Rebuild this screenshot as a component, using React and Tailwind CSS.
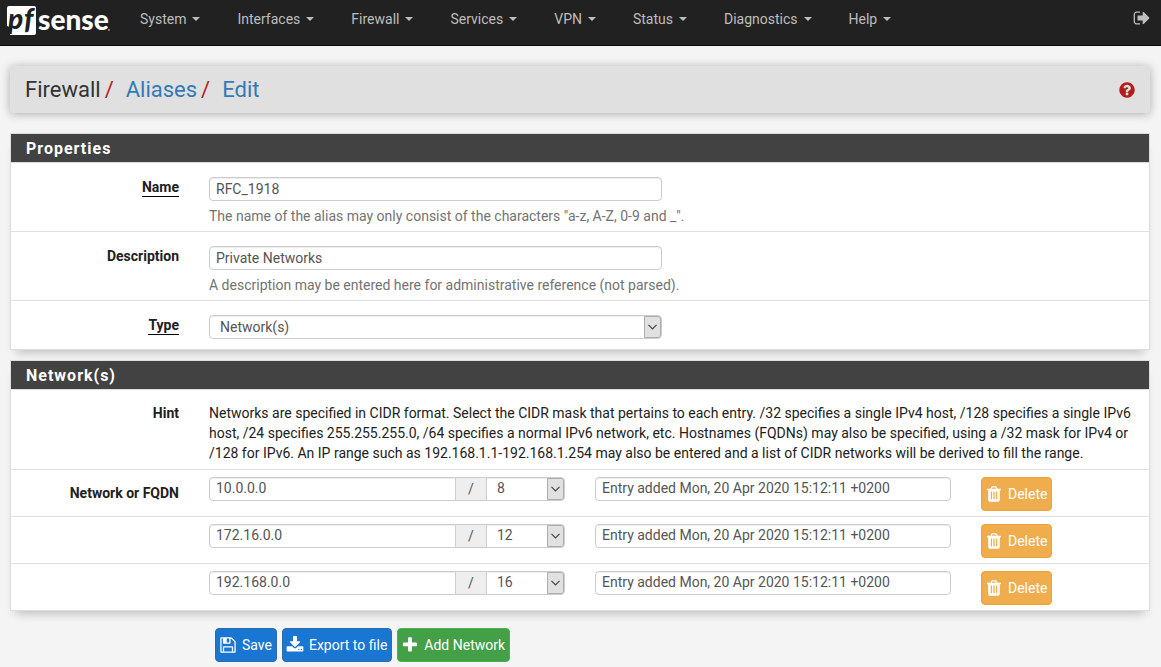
import { useState } from 'react';

const NAV_ITEMS = ['System', 'Interfaces', 'Firewall', 'Services', 'VPN', 'Status', 'Diagnostics', 'Help'];

const ICONS = {
  signOut:
    'M704 1440q0 4 1 20t.5 26.5-3 23.5-10 19.5-20.5 6.5h-320q-119 0-203.5-84.5t-84.5-203.5v-704q0-119 84.5-203.5t203.5-84.5h320q13 0 22.5 9.5t9.5 22.5q0 4 1 20t.5 26.5-3 23.5-10 19.5-20.5 6.5h-320q-66 0-113 47t-47 113v704q0 66 47 113t113 47h312l11.5 1 11.5 3 8 5.5 7 9 2 13.5zm928-544q0 26-19 45l-544 544q-19 19-45 19t-45-19-19-45v-288h-448q-26 0-45-19t-19-45v-384q0-26 19-45t45-19h448v-288q0-26 19-45t45-19 45 19l544 544q19 19 19 45z',
  question:
    'M1024 1376v-192q0-14-9-23t-23-9h-192q-14 0-23 9t-9 23v192q0 14 9 23t23 9h192q14 0 23-9t9-23zm256-672q0-88-55.5-163t-138.5-116-170-41q-243 0-371 213-15 24 8 42l132 100q7 6 19 6 16 0 25-12 53-68 86-92 34-24 86-24 48 0 85.5 26t37.5 59q0 38-20 61t-68 45q-63 28-115.5 86.5t-52.5 125.5v36q0 14 9 23t23 9h192q14 0 23-9t9-23q0-19 21.5-49.5t54.5-49.5q32-18 49-28.5t46-35 44.5-48 28-60.5 12.5-81zm384 192q0 209-103 385.5t-279.5 279.5-385.5 103-385.5-103-279.5-279.5-103-385.5 103-385.5 279.5-279.5 385.5-103 385.5 103 279.5 279.5 103 385.5z',
  trash:
    'M704 1376v-704q0-14-9-23t-23-9h-64q-14 0-23 9t-9 23v704q0 14 9 23t23 9h64q14 0 23-9t9-23zm256 0v-704q0-14-9-23t-23-9h-64q-14 0-23 9t-9 23v704q0 14 9 23t23 9h64q14 0 23-9t9-23zm256 0v-704q0-14-9-23t-23-9h-64q-14 0-23 9t-9 23v704q0 14 9 23t23 9h64q14 0 23-9t9-23zm-544-992h448l-48-117q-7-9-17-11h-317q-10 2-17 11zm928 32v64q0 14-9 23t-23 9h-96v948q0 83-47 143.5t-113 60.5h-832q-66 0-113-58.5t-47-141.5v-952h-96q-14 0-23-9t-9-23v-64q0-14 9-23t23-9h309l70-167q15-37 54-63t79-26h320q40 0 79 26t54 63l70 167h309q14 0 23 9t9 23z',
  save: 'M512 1536h768v-384h-768v384zm896 0h128v-896q0-14-10-38.5t-20-34.5l-281-281q-10-10-34-20t-39-10v416q0 40-28 68t-68 28h-576q-40 0-68-28t-28-68v-416h-128v1280h128v-416q0-40 28-68t68-28h832q40 0 68 28t28 68v416zm-384-928v-320q0-13-9.5-22.5t-22.5-9.5h-192q-13 0-22.5 9.5t-9.5 22.5v320q0 13 9.5 22.5t22.5 9.5h192q13 0 22.5-9.5t9.5-22.5zm640 32v928q0 40-28 68t-68 28h-1344q-40 0-68-28t-28-68v-1344q0-40 28-68t68-28h928q40 0 88 20t76 48l280 280q28 28 48 76t20 88z',
  download:
    'M1344 1344q0-26-19-45t-45-19-45 19-19 45 19 45 45 19 45-19 19-45zm256 0q0-26-19-45t-45-19-45 19-19 45 19 45 45 19 45-19 19-45zm128-224v320q0 40-28 68t-68 28h-1472q-40 0-68-28t-28-68v-320q0-40 28-68t68-28h465l135 136q58 56 136 56t136-56l136-136h464q40 0 68 28t28 68zm-325-569q17 41-14 70l-448 448q-18 19-45 19t-45-19l-448-448q-31-29-14-70 17-39 59-39h256v-448q0-26 19-45t45-19h256q26 0 45 19t19 45v448h256q42 0 59 39z',
  plus: 'M1600 736v192q0 40-28 68t-68 28h-416v416q0 40-28 68t-68 28h-192q-40 0-68-28t-28-68v-416h-416q-40 0-68-28t-28-68v-192q0-40 28-68t68-28h416v-416q0-40 28-68t68-28h192q40 0 68 28t28 68v416h416q40 0 68 28t28 68z',
};

const INITIAL_ENTRIES = [
  { id: 0, address: '10.0.0.0', mask: '8', detail: 'Entry added Mon, 20 Apr 2020 15:12:11 +0200' },
  { id: 1, address: '172.16.0.0', mask: '12', detail: 'Entry added Mon, 20 Apr 2020 15:12:11 +0200' },
  { id: 2, address: '192.168.0.0', mask: '16', detail: 'Entry added Mon, 20 Apr 2020 15:12:11 +0200' },
];

const MASKS = Array.from({ length: 129 }, (_, i) => String(128 - i));

const fieldClass =
  'block w-full h-6 rounded border border-[#ccc] bg-white px-1.5 text-sm leading-[18px] text-[#555] shadow-[inset_0_1px_1px_rgba(0,0,0,0.075)] outline-none';

const buttonClass = 'flex h-[34px] items-center gap-[5px] rounded border pl-[3px] pr-1 text-white';

function Icon({ name, size = 18 }) {
  return (
    <svg width={size} height={size} viewBox="0 0 1792 1792" fill="currentColor" aria-hidden="true" className="shrink-0">
      <path d={ICONS[name]} />
    </svg>
  );
}

function Logo() {
  return (
    <a href="#home" aria-label="pfSense" className="block shrink-0">
      <svg width="110" height="44" viewBox="0 0 110 44" aria-hidden="true">
        <path d="M9 6H34Q36 6 36 8V33Q36 35 34 35H10L12 28L7 26V8Q7 6 9 6Z" fill="#fff" />
        <g fontFamily="Lato, sans-serif" fontWeight="900" fontSize="28">
          <text y="29" fontStyle="italic" fill="#212121">
            <tspan x="8">p</tspan>
            <tspan x="24">f</tspan>
          </text>
          <text x="38" y="30" fill="#fff">
            sense
          </text>
        </g>
        <circle cx="109" cy="30" r="1" fill="#999" />
      </svg>
    </a>
  );
}

function Navbar() {
  return (
    <header className="flex h-[46px] items-start border-b border-[#080808] bg-[#212121] pr-2.5 text-[#bdbdbd]">
      <Logo />
      <nav className="ml-[30px] flex flex-1 gap-[37px] pt-[9px]">
        {NAV_ITEMS.map((item) => (
          <a key={item} href={`#${item.toLowerCase()}`} className="flex items-center gap-1.5 text-sm">
            {item}
            <span className="border-x-4 border-t-4 border-x-transparent border-t-[#bdbdbd]" />
          </a>
        ))}
      </nav>
      <a href="#logout" aria-label="Logout" className="pt-[9px]">
        <Icon name="signOut" />
      </a>
    </header>
  );
}

function Panel({ title, children }) {
  return (
    <section className="border border-[#ddd] bg-white shadow-[0_8px_10px_-6px_rgba(0,0,0,0.25)]">
      <h2 className="border-b border-[#ddd] bg-[#424242] px-[15px] pt-px text-base leading-[27px] font-bold tracking-[1px] text-white">
        {title}
      </h2>
      <div className="divide-y divide-[#e0e0e0]">{children}</div>
    </section>
  );
}

function FormRow({ label, htmlFor, required, children }) {
  return (
    <div>
      <div className="-mx-2.5 grid grid-cols-6 pt-3.5">
        <label htmlFor={htmlFor} className="px-[15px] text-right leading-5 font-bold text-[#212121]">
          <span className={required ? 'inline-block border-b border-black leading-[17px]' : ''}>{label}</span>
        </label>
        <div className="col-span-5">{children}</div>
      </div>
    </div>
  );
}

function Select({ className, children, ...props }) {
  return (
    <div className="relative">
      <select {...props} className={`${fieldClass} appearance-none ${className}`}>
        {children}
      </select>
      <span className="pointer-events-none absolute inset-y-px right-px flex w-[17px] items-center justify-center rounded-r-[3px] border border-[#adadad] bg-[#e1e1e1]">
        <svg width="9" height="6" viewBox="0 0 9 6" fill="none" stroke="#444" strokeWidth="1.2" aria-hidden="true">
          <path d="M0.5 0.8L4.5 4.8L8.5 0.8" />
        </svg>
      </span>
    </div>
  );
}

function NetworkRow({ entry, first, onChange, onDelete }) {
  return (
    <div>
      <div className="-mx-2.5 grid grid-cols-6 pt-[7px] pb-[5px]">
        <div className="px-[15px] pt-1.5 text-right leading-5 font-bold text-[#212121]">
          {first && <label htmlFor={`address${entry.id}`}>Network or FQDN</label>}
        </div>
        <div className="col-span-5 grid grid-cols-[2fr_2fr_1fr]">
          <div className="flex px-[15px]">
            <input
              id={`address${entry.id}`}
              aria-label="Network or FQDN"
              value={entry.address}
              onChange={(e) => onChange(entry.id, 'address', e.target.value)}
              className={`${fieldClass} min-w-0 flex-1 rounded-r-none pb-0.5`}
            />
            <span className="h-6 w-[30px] border-y border-[#ccc] bg-[#eee] text-center leading-[22px] text-[#555]">/</span>
            <div className="w-[79px]">
              <Select
                aria-label="Mask"
                value={entry.mask}
                onChange={(e) => onChange(entry.id, 'mask', e.target.value)}
                className="rounded-l-none pb-0.5 pl-2.5"
              >
                {MASKS.map((mask) => (
                  <option key={mask}>{mask}</option>
                ))}
              </Select>
            </div>
          </div>
          <div className="px-[15px]">
            <input
              aria-label="Entry description"
              value={entry.detail}
              onChange={(e) => onChange(entry.id, 'detail', e.target.value)}
              className={`${fieldClass} pb-0.5`}
            />
          </div>
          <div className="px-[15px]">
            <button
              type="button"
              onClick={() => onDelete(entry.id)}
              className={`${buttonClass} border-[#eea236] bg-[#f0ad4e]`}
            >
              <Icon name="trash" />
              Delete
            </button>
          </div>
        </div>
      </div>
    </div>
  );
}

export default function App() {
  const [name, setName] = useState('RFC_1918');
  const [description, setDescription] = useState('Private Networks');
  const [type, setType] = useState('Network(s)');
  const [entries, setEntries] = useState(INITIAL_ENTRIES);

  const updateEntry = (id, key, value) =>
    setEntries(entries.map((entry) => (entry.id === id ? { ...entry, [key]: value } : entry)));

  const deleteEntry = (id) => setEntries(entries.filter((entry) => entry.id !== id));

  const addEntry = () => setEntries([...entries, { id: Date.now(), address: '', mask: '128', detail: '' }]);

  return (
    <div className="min-h-screen bg-[#f4f4f4] font-[Roboto,sans-serif] text-sm text-[#212121]">
      <Navbar />
      <main className="pt-5 pr-[11px] pl-2.5">
        {/* Breadcrumb */}
        <div className="flex h-[47px] items-center justify-between rounded bg-[#e0e0e0] px-3.5 shadow-[0_1px_10px_rgba(0,0,0,0.3)]">
          <h1 className="flex pl-px text-[22px] text-[#333]">
            Firewall
            <span className="mr-3 ml-1 text-[#b71c1c]">/</span>
            <a href="#aliases" className="text-[#337ab7]">Aliases</a>
            <span className="mr-3 ml-1 text-[#b71c1c]">/</span>
            <a href="#edit" className="text-[#337ab7]">Edit</a>
          </h1>
          <a href="#help" aria-label="Help for this page" className="text-[#b71c1c]">
            <Icon name="question" />
          </a>
        </div>

        <form onSubmit={(e) => e.preventDefault()}>
          <div className="mt-5 space-y-2.5">
            <Panel title="Properties">
              <FormRow label="Name" htmlFor="name" required>
                <div className="w-1/2 px-[15px]">
                  <input id="name" value={name} onChange={(e) => setName(e.target.value)} className={fieldClass} />
                </div>
                <p className="px-[15px] py-[5px] leading-5 text-[#737373]">
                  The name of the alias may only consist of the characters "a-z, A-Z, 0-9 and _".
                </p>
              </FormRow>
              <FormRow label="Description" htmlFor="descr">
                <div className="w-1/2 px-[15px]">
                  <input
                    id="descr"
                    value={description}
                    onChange={(e) => setDescription(e.target.value)}
                    className={fieldClass}
                  />
                </div>
                <p className="px-[15px] py-[5px] leading-5 text-[#737373]">
                  A description may be entered here for administrative reference (not parsed).
                </p>
              </FormRow>
              <FormRow label="Type" htmlFor="type" required>
                <div className="w-1/2 px-[15px] pb-2.5">
                  <Select id="type" value={type} onChange={(e) => setType(e.target.value)} className="pl-2.5">
                    <option>Host(s)</option>
                    <option>Network(s)</option>
                    <option>Port(s)</option>
                    <option>URL (IPs)</option>
                  </Select>
                </div>
              </FormRow>
            </Panel>

            <Panel title="Network(s)">
              <div>
                <div className="-mx-2.5 grid grid-cols-6 pt-[13px] pb-1.5">
                  <span className="px-[15px] text-right leading-5 font-bold">Hint</span>
                  <p className="col-span-5 px-[15px] leading-5">
                    Networks are specified in CIDR format. Select the CIDR mask that pertains to each entry. /32
                    specifies a single IPv4 host, /128 specifies a single IPv6 host, /24 specifies 255.255.255.0, /64
                    specifies a normal IPv6 network, etc. Hostnames (FQDNs) may also be specified, using a /32 mask for
                    IPv4 or /128 for IPv6. An IP range such as 192.168.1.1-192.168.1.254 may also be entered and a list
                    of CIDR networks will be derived to fill the range.
                  </p>
                </div>
              </div>
              {entries.map((entry, i) => (
                <NetworkRow
                  key={entry.id}
                  entry={entry}
                  first={i === 0}
                  onChange={updateEntry}
                  onDelete={deleteEntry}
                />
              ))}
            </Panel>
          </div>

          {/* Form actions */}
          <div className="grid grid-cols-6 pt-[17px] pb-[5px]">
            <div className="col-span-5 col-start-2 flex gap-[5px] px-[15px]">
              <button type="submit" className={`${buttonClass} border-[#2e6da4] bg-[#1976d2]`}>
                <Icon name="save" />
                Save
              </button>
              <button type="button" className={`${buttonClass} border-[#2e6da4] bg-[#1976d2]`}>
                <Icon name="download" />
                Export to file
              </button>
              <button type="button" onClick={addEntry} className={`${buttonClass} border-[#4cae4c] bg-[#43a047]`}>
                <Icon name="plus" />
                Add Network
              </button>
            </div>
          </div>
        </form>
      </main>
    </div>
  );
}
